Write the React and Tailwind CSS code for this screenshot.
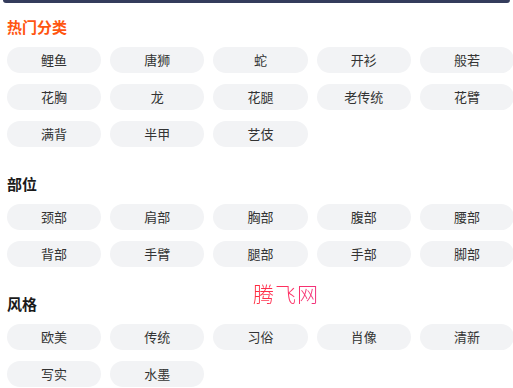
const sections = [
  { title: "热门分类", hot: true, items: ["鲤鱼", "唐狮", "蛇", "开衫", "般若", "花胸", "龙", "花腿", "老传统", "花臂", "满背", "半甲", "艺伎"] },
  { title: "部位", items: ["颈部", "肩部", "胸部", "腹部", "腰部", "背部", "手臂", "腿部", "手部", "脚部"] },
  { title: "风格", items: ["欧美", "传统", "习俗", "肖像", "清新", "写实", "水墨"] },
];

export default function App() {
  return (
    <div
      className="relative w-[513px] h-[388px] overflow-hidden bg-white"
      style={{ fontFamily: '"Noto Sans CJK SC", "Noto Sans", sans-serif' }}
    >
      {/* bottom edge of the banner above */}
      <div className="mx-[3px] h-[3px] rounded-b-[3px] bg-[#343c5c]" />

      <div className="pl-[7px] pt-[14px]">
        {sections.map((s) => (
          <section key={s.title} className="mb-[27px]">
            <h2
              className={`h-5 leading-5 text-[15px] font-bold ${s.hot ? "text-[#ff5510]" : "text-[#1a1a1a]"}`}
            >
              {s.title}
            </h2>
            <div className="mt-[10px] grid w-[507px] grid-cols-5 gap-x-[9px] gap-y-[11px]">
              {s.items.map((it) => (
                <button
                  key={it}
                  type="button"
                  className="h-[26px] rounded-full bg-[#f2f3f5] text-[13px] leading-[26px] text-[#333]"
                >
                  {it}
                </button>
              ))}
            </div>
          </section>
        ))}
      </div>

      {/* watermark */}
      <span className="absolute left-[253px] top-[280px] bg-gradient-to-r from-[#ff2a3a] via-[#ff3060] to-[#f0307c] bg-clip-text text-[21px] font-light leading-[26px] tracking-[1px] text-transparent">
        腾飞网
      </span>
    </div>
  );
}
